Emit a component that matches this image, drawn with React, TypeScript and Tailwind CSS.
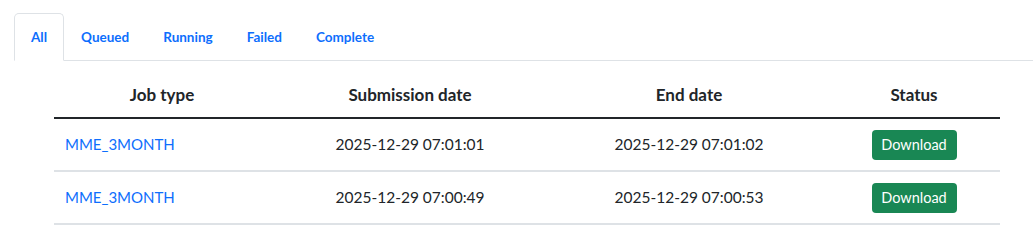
import { useState } from 'react';

const tabs = ['All', 'Queued', 'Running', 'Failed', 'Complete'];

const jobs = [
  { type: 'MME_3MONTH', submitted: '2025-12-29 07:01:01', ended: '2025-12-29 07:01:02' },
  { type: 'MME_3MONTH', submitted: '2025-12-29 07:00:49', ended: '2025-12-29 07:00:53' },
];

export default function App() {
  const [active, setActive] = useState('All');

  return (
    <div className="min-h-screen bg-white text-[#212529] font-['Lato','Noto_Sans',sans-serif]">
      {/* Tabs */}
      <div className="pt-[13px] pl-[14px]">
        <ul className="flex border-b border-[#dee2e6]">
          {tabs.map((tab) => (
            <li key={tab} className="-mb-px">
              <button
                onClick={() => setActive(tab)}
                className={`h-[48px] px-4 text-[13.5px] font-bold text-[#0d6efd] rounded-t-[5px] border ${
                  active === tab ? 'bg-white border-[#dee2e6] border-b-white' : 'border-transparent'
                }`}
              >
                {tab}
              </button>
            </li>
          ))}
        </ul>
      </div>

      {/* Jobs table */}
      <div className="ml-[54px] mt-[12px] w-[946px]">
        <table className="w-full table-fixed border-collapse">
          <colgroup>
            <col className="w-[216px]" />
            <col className="w-[280px]" />
            <col className="w-[278px]" />
            <col className="w-[172px]" />
          </colgroup>
          <thead>
            <tr className="border-b-2 border-[#212529]">
              <th className="h-[45px] text-center text-[17px] font-bold">Job type</th>
              <th className="h-[45px] text-center text-[17px] font-bold">Submission date</th>
              <th className="h-[45px] text-center text-[17px] font-bold">End date</th>
              <th className="h-[45px] text-center text-[17px] font-bold">Status</th>
            </tr>
          </thead>
          <tbody>
            {jobs.map((job, i) => (
              <tr key={i} className="border-b-2 border-[#dee2e6]">
                <td className="h-[53px] pl-[11px] text-left text-[15px]">
                  <a href="#" className="text-[#0d6efd]">
                    {job.type}
                  </a>
                </td>
                <td className="h-[53px] text-center text-[15.5px]">{job.submitted}</td>
                <td className="h-[53px] text-center text-[15.5px]">{job.ended}</td>
                <td className="h-[53px] text-center">
                  <button className="h-[30px] w-[85px] rounded-[4px] bg-[#198754] text-[14.5px] text-white">
                    Download
                  </button>
                </td>
              </tr>
            ))}
          </tbody>
        </table>
      </div>
    </div>
  );
}
